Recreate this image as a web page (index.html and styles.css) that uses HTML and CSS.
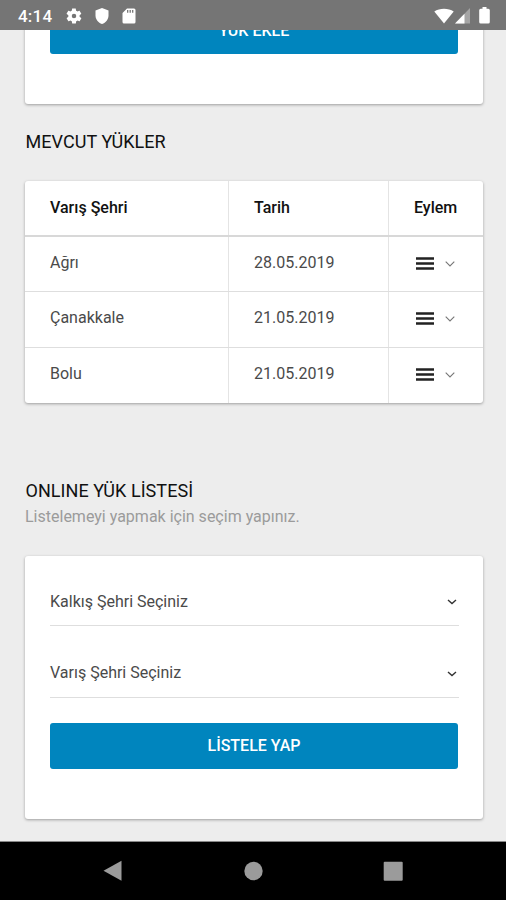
FILE: index.html
```html
<!DOCTYPE html>
<html lang="tr">
<head>
<meta charset="utf-8">
<title>Mevcut Yükler</title>
<link rel="stylesheet" href="styles.css">
</head>
<body>
<header class="status">
  <span class="clock">4:14</span>
  <svg class="gear" width="18" height="18" viewBox="0 0 24 24"><path d="M19.4 13c0-.3.1-.6.1-1s0-.7-.1-1l2.1-1.600c.2-.2.3-.4.1-.6l-2-3.500c-.1-.2-.4-.3-.6-.2l-2.500 1c-.5-.4-1.100-.7-1.700-1l-.4-2.600c0-.3-.2-.5-.5-.5h-4c-.3 0-.5.2-.5.500L9 5.100c-.6.2-1.200.6-1.700 1l-2.500-1c-.2-.1-.5 0-.6.200l-2 3.500c-.1.200-.1.400.1.600L4.500 11c0 .3-.1.600-.1 1s0 .7.1 1l-2.100 1.600c-.2.200-.3.400-.1.600l2 3.500c.1.200.4.300.6.200l2.500-1c.5.400 1.100.7 1.700 1l.4 2.600c0 .3.200.5.500.5h4c.3 0 .5-.2.500-.5l.4-2.600c.6-.3 1.200-.6 1.700-1l2.500 1c.2.100.5 0 .6-.2l2-3.500c.1-.2.1-.4-.1-.6zM12 15a3 3 0 1 1 0-6 3 3 0 0 1 0 6z"/></svg>
  <svg class="shield" width="14" height="16" viewBox="0 0 14 16"><path d="M7 0l6.500 2.500v5c0 4-2.700 7.200-6.500 8.500C3.200 14.700.5 11.500.5 7.500v-5z"/></svg>
  <svg class="sd" width="14" height="16" viewBox="0 0 14 16"><path d="M5 .5h7A1.500 1.500 0 0 1 13.500 2v12a1.500 1.500 0 0 1-1.500 1.500H2A1.500 1.500 0 0 1 .5 14V5z"/><path class="pins" d="M5.700 2v2.800M8.200 2v2.800M10.700 2v2.800"/></svg>
  <svg class="wifi" width="20" height="16" viewBox="0 0 20 16"><path d="M.3 3.500C5.500-.3 14.500-.3 19.700 3.500L10 15.500z"/></svg>
  <svg class="signal" width="15" height="16" viewBox="0 0 15 16"><path opacity=".35" d="M15 0v15.500H0z"/><path d="M9.500 5.700v9.800H0z"/></svg>
  <svg class="battery" width="11" height="17" viewBox="0 0 11 17"><path d="M3.500 0h4v1.700H9.300A1.500 1.500 0 0 1 10.800 3.200V15a1.500 1.500 0 0 1-1.500 1.500H1.700A1.500 1.500 0 0 1 .2 15V3.200a1.500 1.500 0 0 1 1.500-1.500H3.500z"/></svg>
</header>
<main class="content">
  <section class="card card-add"><button class="btn">YÜK EKLE</button></section>
  <h2 class="title">MEVCUT YÜKLER</h2>
  <section class="card grid">
    <div class="row head"><span>Varış Şehri</span><span>Tarih</span><span>Eylem</span></div>
    <div class="row first"><span>Ağrı</span><span>28.05.2019</span><span class="action"><svg width="18" height="13" viewBox="0 0 18 13"><path class="bars" d="M0 1.500h18M0 6.500h18M0 11.500h18"/></svg><svg width="10" height="6" viewBox="0 0 10 6"><path d="M.7.7L5 5 9.300.7"/></svg></span></div>
    <div class="row"><span>Çanakkale</span><span>21.05.2019</span><span class="action"><svg width="18" height="13" viewBox="0 0 18 13"><path class="bars" d="M0 1.500h18M0 6.500h18M0 11.500h18"/></svg><svg width="10" height="6" viewBox="0 0 10 6"><path d="M.7.7L5 5 9.300.7"/></svg></span></div>
    <div class="row"><span>Bolu</span><span>21.05.2019</span><span class="action"><svg width="18" height="13" viewBox="0 0 18 13"><path class="bars" d="M0 1.500h18M0 6.500h18M0 11.500h18"/></svg><svg width="10" height="6" viewBox="0 0 10 6"><path d="M.7.7L5 5 9.300.7"/></svg></span></div>
  </section>
  <h2 class="title title-online">ONLINE YÜK LİSTESİ</h2>
  <p class="hint">Listelemeyi yapmak için seçim yapınız.</p>
  <section class="card form">
    <div class="select"><span>Kalkış Şehri Seçiniz</span><svg width="10" height="6" viewBox="0 0 10 6"><path d="M1 1l4 3.500L9 1"/></svg></div>
    <div class="select"><span>Varış Şehri Seçiniz</span><svg width="10" height="6" viewBox="0 0 10 6"><path d="M1 1l4 3.500L9 1"/></svg></div>
    <button class="btn">LİSTELE YAP</button>
  </section>
</main>
<nav class="nav">
  <svg width="20" height="22" viewBox="0 0 20 22"><path d="M18.500.8v20L.5 10.800z"/></svg>
  <svg width="20" height="20" viewBox="0 0 20 20"><circle cx="10.500" cy="10" r="9.200"/></svg>
  <svg width="20" height="20" viewBox="0 0 20 20"><rect x=".7" y=".8" width="19" height="19" rx="1"/></svg>
</nav>
</body>
</html>
```
FILE: styles.css
```css
* { box-sizing: border-box; }
body { margin: 0; height: 900px; display: flex; flex-direction: column; overflow: hidden; background: #ededed; font-family: Roboto, sans-serif; font-size: 16px; color: #4a4a4a; }
.status { height: 30px; flex: none; background: #757575; color: #fff; display: flex; align-items: center; padding: 1px 16px 0 18px; }
.status svg { fill: #fff; flex: none; }
.status .pins { fill: none; stroke: #757575; stroke-width: 1.3; }
.clock { width: 47px; font-size: 17px; font-weight: 500; letter-spacing: .2px; }
.shield { margin-left: 12px; }
.sd { margin-left: 13px; }
.wifi { margin-left: auto; }
.signal { margin-left: 1px; }
.battery { margin-left: 9px; }
.content { flex: 1; min-height: 0; overflow: hidden; padding: 0 23px 0 25px; border-bottom: 1px solid #888; }
.card { background: #fff; border-radius: 3px; box-shadow: 0 1px 3px rgba(0,0,0,.34); }
.btn { display: block; width: 408px; height: 46px; border: 0; border-radius: 3px; padding: 0 0 2px; background: #0085be; color: #fff; font: 500 16px Roboto, sans-serif; }
/* The first card is scrolled up under the status bar. */
.card-add { height: 96px; margin-top: -22px; padding-left: 25px; }
.title { margin: 26px 0 0 .5px; height: 24px; line-height: 24px; font-size: 18px; font-weight: 400; letter-spacing: .06px; color: #111; white-space: nowrap; }
.grid { margin-top: 27px; height: 222px; }
.row { display: grid; grid-template-columns: 204px 160px 94px; height: 55.5px; border-bottom: 1px solid #dedede; }
.row.first { height: 55px; }
.row:last-child { border-bottom: 0; }
.row > span { display: flex; align-items: center; padding: 0 0 4px 25px; border-right: 1px solid #e4e4e4; }
.row > span:last-child { border-right: 0; }
.head { height: 56px; border-bottom: 2px solid #d8d8d8; color: #111; font-weight: 500; }
.head > span { padding-bottom: 2px; }
.row > .action { gap: 11px; padding: 0 0 1px 27px; }
.action svg { fill: none; stroke: #777; stroke-width: 1.1; }
.action .bars { stroke: #222; stroke-width: 2.5; }
.title-online { margin-top: 76px; }
.hint { margin: 2px 0 0; height: 24px; line-height: 24px; color: #9b9b9b; }
.form { margin-top: 27px; height: 262.500px; padding: 18px 25px 0; }
.select { width: 409px; height: 52px; margin-bottom: 19px; border-bottom: 1px solid #dedede; display: flex; align-items: center; justify-content: space-between; padding: 5px 2px 0 0; }
.select + .select { height: 53px; margin-bottom: 25px; }
.select span { padding-bottom: 2px; }
.select svg { fill: none; stroke: #333; stroke-width: 1.4; }
.nav { height: 58px; flex: none; background: #000; display: flex; justify-content: center; align-items: center; gap: 120px; padding-bottom: 1px; }
.nav svg { fill: #9b9b9b; }
```
